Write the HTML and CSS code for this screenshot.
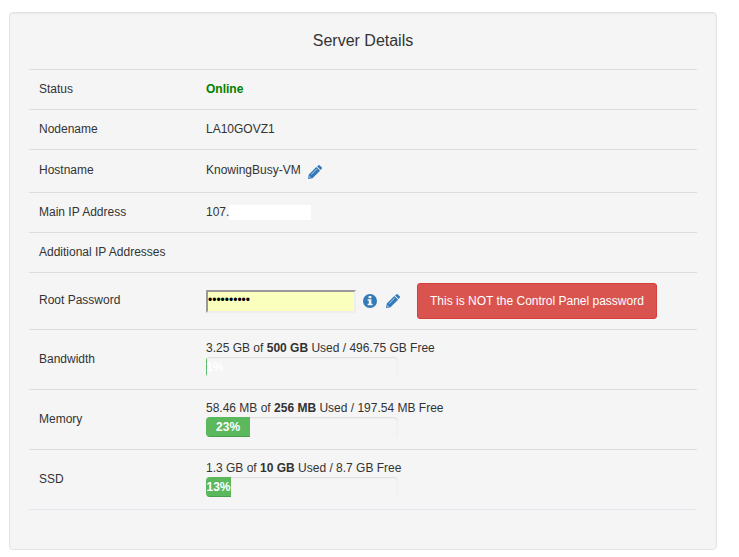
FILE: index.html
```html
<!DOCTYPE html>
<html lang="en">
<head>
  <meta charset="UTF-8">
  <meta name="viewport" content="width=device-width, initial-scale=1.0">
  <title>Server Details</title>
  <link rel="stylesheet" href="styles.css">
</head>
<body>
  <svg class="sprite" aria-hidden="true">
    <symbol id="pencil" viewBox="0 0 14 14">
      <path d="M9 1.4 10.2.4q.9-.7 1.6 0l1.9 1.9q.6.7 0 1.5L12.6 5zM8.3 1.9 12.1 5.7l-7.6 7.5L0 14l.8-4.5z"/>
      <path class="shine" d="m8.4 3.7.6.6-5.5 5.5-.6-.6zM1.4 11l1.6 1.6-1.2.3-.7-.7z"/>
    </symbol>
    <symbol id="info" viewBox="0 0 14 14">
      <circle cx="7" cy="7" r="7"/>
      <path class="mark" d="M5.6 2h2.8v2.2H5.6zM4.6 5.2h3.8v4.5h1.2v1.6h-5V9.7h1.2V6.7H4.6z"/>
    </symbol>
  </svg>

  <div class="well">
    <h1>Server Details</h1>
    <table class="details">
      <tbody>
        <tr>
          <th scope="row">Status</th>
          <td><span class="online">Online</span></td>
        </tr>
        <tr>
          <th scope="row">Nodename</th>
          <td>LA10GOVZ1</td>
        </tr>
        <tr class="edit-row">
          <th scope="row">Hostname</th>
          <td>
            <div class="line hostname">
              KnowingBusy-VM
              <a href="#" class="icon" aria-label="Edit hostname"><svg><use href="#pencil"/></svg></a>
            </div>
          </td>
        </tr>
        <tr>
          <th scope="row">Main IP Address</th>
          <td><div class="line">107.<span class="masked"></span></div></td>
        </tr>
        <tr>
          <th scope="row">Additional IP Addresses</th>
          <td></td>
        </tr>
        <tr class="edit-row">
          <th scope="row"><label for="root-password">Root Password</label></th>
          <td>
            <div class="line password">
              <input type="password" id="root-password" value="0123456789">
              <a href="#" class="icon" aria-label="Password info"><svg><use href="#info"/></svg></a>
              <a href="#" class="icon" aria-label="Edit password"><svg><use href="#pencil"/></svg></a>
              <button type="button" class="btn-danger">This is NOT the Control Panel password</button>
            </div>
          </td>
        </tr>
        <tr class="usage-row">
          <th scope="row">Bandwidth</th>
          <td>
            3.25 GB of <b>500 GB</b> Used / 496.75 GB Free
            <div class="progress"><div class="bar" style="width: 0.65%">1%</div></div>
          </td>
        </tr>
        <tr class="usage-row">
          <th scope="row">Memory</th>
          <td>
            58.46 MB of <b>256 MB</b> Used / 197.54 MB Free
            <div class="progress"><div class="bar" style="width: 23%">23%</div></div>
          </td>
        </tr>
        <tr class="usage-row">
          <th scope="row">SSD</th>
          <td>
            1.3 GB of <b>10 GB</b> Used / 8.7 GB Free
            <div class="progress"><div class="bar" style="width: 13%">13%</div></div>
          </td>
        </tr>
      </tbody>
    </table>
  </div>
</body>
</html>
```
FILE: styles.css
```css
* {
  box-sizing: border-box;
}

body {
  margin: 0;
  padding: 12px 22px 7px 9px;
  background-color: #fff;
  color: #333;
  font-family: "Liberation Sans", Arial, sans-serif;
  font-size: 12px;
  line-height: 18px;
}

.sprite {
  display: none;
}

.well {
  padding: 19px 19px 39px;
  background-color: #f5f5f5;
  border: 1px solid #e3e3e3;
  border-radius: 4px;
  box-shadow: inset 0 1px 1px rgba(0, 0, 0, 0.05);
}

h1 {
  margin: 0 0 19px;
  font-size: 16px;
  font-weight: normal;
  line-height: 18px;
  text-align: center;
}

.details {
  width: 100%;
  table-layout: fixed;
  border-spacing: 0;
  border-bottom: 1px solid #e6e6f0;
}

.details th,
.details td {
  padding: 10px 10px 11px;
  border-top: 1px solid #ddd;
  text-align: left;
  vertical-align: middle;
}

.details th {
  width: 25%;
  font-weight: normal;
}

.details .edit-row th {
  padding-bottom: 12px;
}

.details .edit-row td {
  padding-bottom: 10px;
}

.details .usage-row td {
  padding-top: 9px;
  padding-bottom: 12px;
}

.online {
  color: green;
  font-weight: bold;
}

.line {
  display: flex;
  align-items: center;
}

.hostname {
  align-items: flex-end;
  gap: 7px;
  height: 22px;
  padding-bottom: 3px;
}

.masked {
  width: 82px;
  height: 15px;
  background-color: #fff;
}

.icon {
  flex: none;
  width: 14px;
  height: 14px;
  color: #337ab7;
}

.icon svg {
  display: block;
  width: 14px;
  height: 14px;
  fill: currentColor;
}

.shine {
  fill: #a9c6e2;
}

.mark {
  fill: #f5f5f5;
}

.password .icon {
  margin-right: 9px;
}

.password input {
  width: 150px;
  height: 23px;
  margin-right: 7px;
  padding: 0 0 2px;
  background-color: #faffbd;
  border: 2px solid;
  border-color: #999 #eee #eee #999;
  color: #000;
  font-family: inherit;
  font-size: 12px;
}

.btn-danger {
  height: 36px;
  margin-left: 8px;
  padding: 0 12px;
  background-color: #d9534f;
  border: 1px solid #d43f3a;
  border-radius: 3px;
  color: #fff;
  font-family: inherit;
  font-size: 12px;
  white-space: nowrap;
}

.progress {
  width: 192px;
  height: 20px;
  overflow: hidden;
  background-color: #f5f5f5;
  border-radius: 4px;
  box-shadow: inset 0 1px 2px rgba(0, 0, 0, 0.1);
}

.bar {
  height: 100%;
  background-color: #5cb85c;
  box-shadow: inset 0 -1px 0 rgba(0, 0, 0, 0.15);
  color: #fff;
  font-weight: bold;
  line-height: 20px;
  text-align: center;
}
```
